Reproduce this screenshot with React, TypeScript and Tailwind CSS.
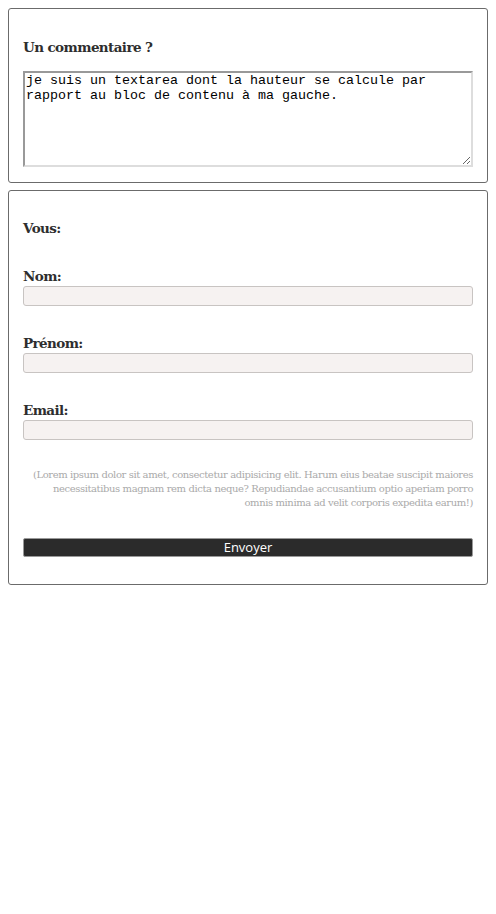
export default function App() {
  const serif = "font-['DejaVu_Serif',serif]";
  const head = "text-[13.5px] font-bold leading-[20px] tracking-[-0.6px] text-[#2e2e2e]";
  return (
    <div className={`flex flex-col gap-[7px] p-2 bg-white text-[#222] ${serif}`}>
      <div className="rounded-[3px] border border-[#6b6b6b] px-[14px] pt-[28px] pb-[15px]">
        <h2 className={head}>Un commentaire ?</h2>
        <textarea
          defaultValue="je suis un textarea dont la hauteur se calcule par rapport au bloc de contenu à ma gauche."
          className="mt-[14px] block h-[96px] w-full resize-y border-2 border-t-[#999] border-l-[#999] border-r-[#ddd] border-b-[#ddd] px-[1px] py-0 font-['Liberation_Mono',monospace] text-[13.33px] leading-[15px] text-black outline-none"
        />
      </div>
      <div className="rounded-[3px] border border-[#6b6b6b] px-[14px] pt-[27px] pb-[27px]">
        <h2 className={head}>Vous:</h2>
        <div className="mt-[28px] flex flex-col gap-[27px]">
          {["Nom:", "Prénom:", "Email:"].map((l) => (
            <label key={l} className="block">
              <span className={`block ${head}`}>{l}</span>
              <input className="block h-[20px] w-full rounded-[3px] border border-[#c8c4c2] bg-[#f6f2f1] outline-none" />
            </label>
          ))}
        </div>
        <p className="mt-[28px] text-right text-[10px] leading-[14px] tracking-[-0.4px] text-[#aaa]">
          (Lorem ipsum dolor sit amet, consectetur adipisicing elit. Harum eius beatae suscipit maiores necessitatibus magnam rem dicta neque? Repudiandae accusantium optio aperiam porro omnis minima ad velit corporis expedita earum!)
        </p>
        <button className="mt-[28px] block h-[19px] w-full rounded-[2px] border border-[#999] bg-[#2b2b2b] font-['Open_Sans',sans-serif] text-[13px] leading-[17px] text-white">
          Envoyer
        </button>
      </div>
    </div>
  );
}
